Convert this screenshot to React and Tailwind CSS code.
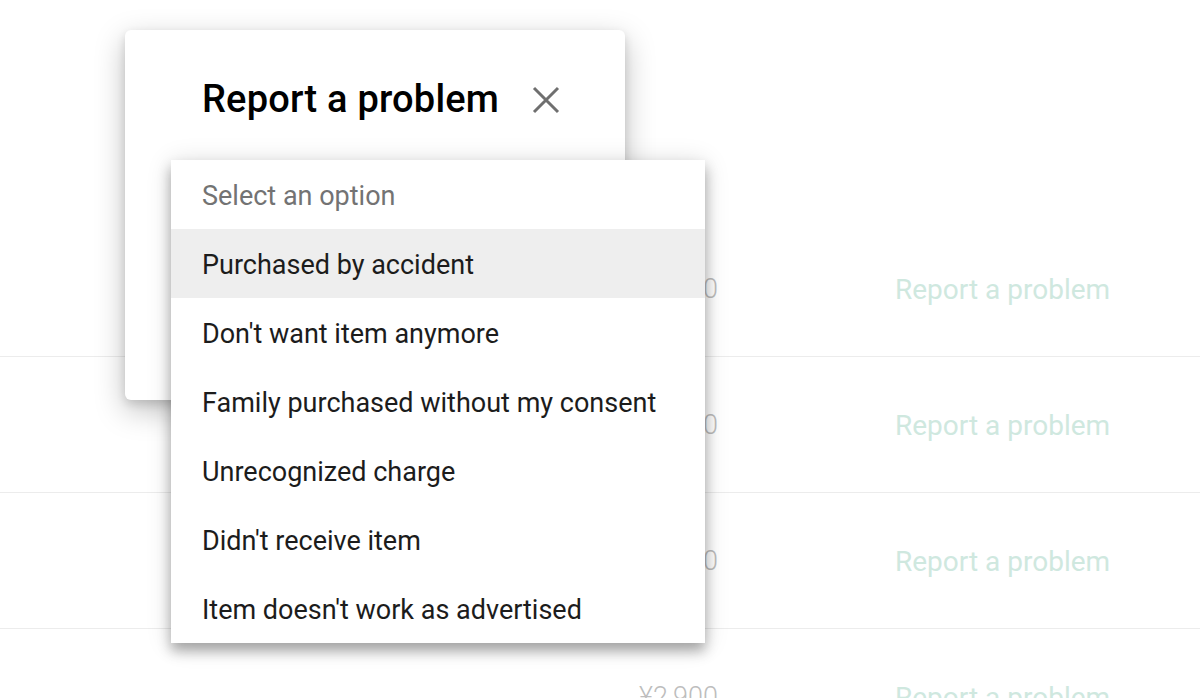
import React from "react";

const rows = ["¥2,900", "¥2,900", "¥2,900", "¥2,900"];

const options = [
  "Purchased by accident",
  "Don't want item anymore",
  "Family purchased without my consent",
  "Unrecognized charge",
  "Didn't receive item",
  "Item doesn't work as advertised",
];

const CloseIcon = () => (
  <svg width="28" height="28" viewBox="0 0 28 28" className="text-[#6f6f6f]">
    <path d="M2 2 L26 26 M26 2 L2 26" stroke="currentColor" strokeWidth="3" fill="none" />
  </svg>
);

const PurchaseRow = ({ price }) => (
  <div className="flex h-[136px] items-center border-b border-[#ececec] pt-[2px]">
    <div className="w-[718px] text-right text-[27px] font-light text-[#bdbdbd]">{price}</div>
    <div className="ml-[177px] text-[28px] text-[#cfe8df]">Report a problem</div>
  </div>
);

export default function App() {
  return (
    <div className="relative h-[698px] w-[1200px] overflow-hidden bg-white font-['Roboto',sans-serif]">
      {/* order history behind the dialog */}
      <div className="pt-[221px]">
        {rows.map((p, i) => (
          <PurchaseRow key={i} price={p} />
        ))}
      </div>

      {/* dialog */}
      <div className="absolute left-[125px] top-[30px] h-[370px] w-[500px] rounded-[6px] bg-white shadow-[0_10px_30px_rgba(0,0,0,0.25),0_4px_10px_rgba(0,0,0,0.12)]">
        <div className="flex items-center pl-[77px] pt-[47px]">
          <h1 className="text-[38px] font-medium leading-[44px] tracking-[0.2px] text-black">
            Report a problem
          </h1>
          <button className="ml-[33px] mt-[2px]">
            <CloseIcon />
          </button>
        </div>
      </div>

      {/* open select menu */}
      <div className="absolute left-[171px] top-[160px] w-[534px] bg-white shadow-[0_8px_12px_rgba(0,0,0,0.3),0_2px_24px_rgba(0,0,0,0.14)]">
        <div className="flex h-[69px] items-center pl-[31px] pt-[3px] text-[27px] text-[#737373]">
          Select an option
        </div>
        {options.map((o, i) => (
          <div
            key={o}
            className={`flex h-[69px] items-center pl-[31px] pt-[3px] text-[27px] text-[#1c1c1c] ${
              i === 0 ? "bg-[#eeeeee]" : ""
            }`}
          >
            {o}
          </div>
        ))}
      </div>
    </div>
  );
}
